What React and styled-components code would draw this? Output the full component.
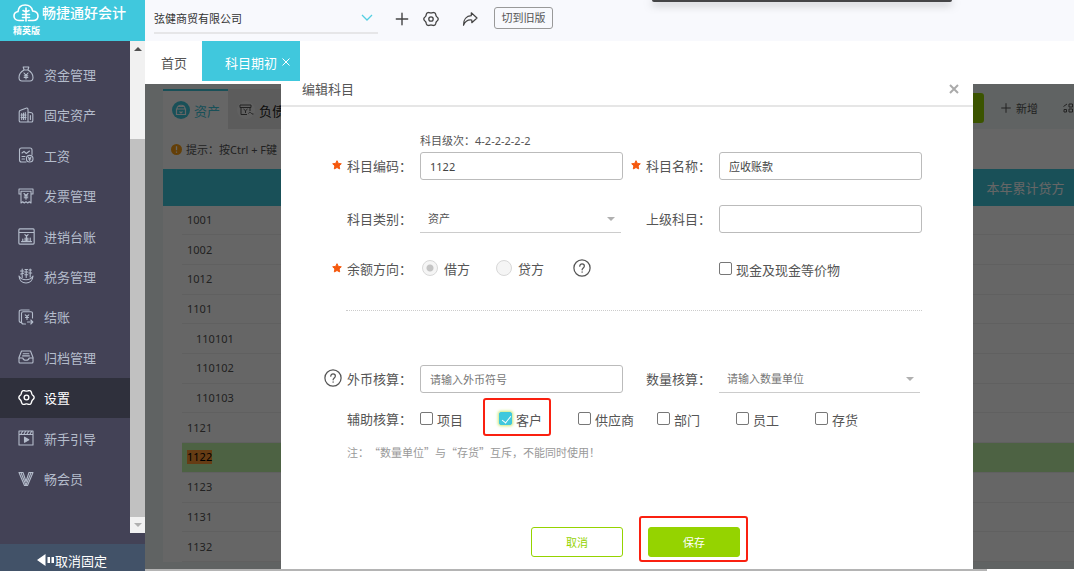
import React, { useState } from "react";
import styled, { createGlobalStyle, css } from "styled-components";

const GlobalStyle = createGlobalStyle`
  * {
    box-sizing: border-box;
  }

  body {
    margin: 0;
    overflow: hidden;
    color: #555;
    background: #fff;
    text-spacing-trim: space-all;
  }

  body, button, input, select {
    font-family: "Noto Sans", "Noto Sans CJK SC", sans-serif;
    font-size: 11px;
  }

  button {
    padding: 0;
    border: 0;
    color: inherit;
    background: none;
    cursor: pointer;
  }

  svg {
    display: block;
    flex: none;
  }
`;

// six soft teeth round a centre
const gearPath = (c, r, depth) => {
  const points = [];
  for (let i = 0; i < 72; i++) {
    const a = (i * Math.PI) / 36;
    const d = r + depth * Math.cos(6 * a);
    points.push(
      `${(c + d * Math.cos(a)).toFixed(2)} ${(c + d * Math.sin(a)).toFixed(2)}`
    );
  }
  return `M${points.join("L")}Z`;
};

const Icon = ({ size = 16, stroke = 1.1, children }) => (
  <svg
    width={size}
    height={size}
    viewBox="0 0 16 16"
    fill="none"
    stroke="currentColor"
    strokeWidth={stroke}
    strokeLinecap="round"
    strokeLinejoin="round"
    aria-hidden="true"
  >
    {children}
  </svg>
);

const GearIcon = ({ size }) => (
  <Icon size={size} stroke={1.3}>
    <path d={gearPath(8, 6.6, 0.6)} />
    <circle cx="8" cy="8" r="2.2" />
  </Icon>
);

const HelpIcon = () => (
  <Icon size={18} stroke={1.1}>
    <circle cx="8" cy="8" r="7.2" />
    <path d="M6 6.4c0-2.7 4.1-2.6 4.1-.1 0 1.6-2 1.7-2 3.3M8.1 11.4v.3" />
  </Icon>
);

const StarIcon = () => (
  <svg width="10" height="10" viewBox="0 0 10 10" fill="#f5590e">
    <path
      d="M5 .7l1.3 2.700 3 .4-2.200 2.100.6 3L5 7.500 2.300 8.900l.6-3L.7 3.800l3-.4z"
      stroke="#f5590e"
      strokeLinejoin="round"
    />
  </svg>
);

const menu = [
  {
    name: "资金管理",
    icon: (
      <Icon>
        <path d="M5.2 1h5.6L9.9 4H6.1zM6 4C3 5.600 1 8.500 1 11.500 1 14 2 15 4 15h8c2 0 3-1 3-3.500C15 8.500 13 5.600 10 4" />
        <path d="M6 7l2 2.400L10 7M8 9.500v3.500M6.200 9.700h3.600M6.200 11.400h3.600" />
      </Icon>
    ),
  },
  {
    name: "固定资产",
    icon: (
      <Icon>
        <path d="M2.500 3.300L8 1.200c1.200-.4 2 .1 2 1.200V15H2.500c-.9 0-1.300-.4-1.300-1.300V5c0-.9.400-1.400 1.300-1.700zM10 5l3.500.8c.9.200 1.300.7 1.300 1.500v6.400c0 .9-.4 1.300-1.300 1.300H10" />
        <path d="M3.700 6.500v6M7.300 5.500v7M5.500 6v6.500M3 8h5M3 10.500h5M12.400 8.500v4" />
      </Icon>
    ),
  },
  {
    name: "工资",
    icon: (
      <Icon>
        <path d="M14 7.500V3c0-1.300-.7-2-2-2H3.500C2 1 1.500 1.700 1.500 3v10c0 1.300.6 2 2 2H8" />
        <path d="M4 6l2-1.700L8.300 6.500 11.500 4M4 9.500h3M4 12h2.500" />
        <circle cx="11.700" cy="11.700" r="3.300" />
        <path d="M10.500 10.300l1.200 1.300 1.200-1.300M11.700 11.800v1.700M10.600 12h2.200" />
      </Icon>
    ),
  },
  {
    name: "发票管理",
    icon: (
      <Icon>
        <path d="M3 6H1V1h14v5h-2M3 3.300h10V15l-1.700-1.300L9.700 15 8 13.700 6.300 15l-1.600-1.300L3 15z" />
        <path d="M6 5.500l2 2 2-2M8 7.500v3.700M6.200 8h3.600M6.200 9.700h3.600" />
      </Icon>
    ),
  },
  {
    name: "进销台账",
    icon: (
      <Icon size={17}>
        <path d="M1.700.9h12.600c.6 0 .9.4.9.9v12.400c0 .5-.3.900-.9.900H1.700c-.6 0-.9-.4-.9-.9V1.800c0-.5.300-.9.900-.9zM1 4.200h14" />
        <path d="M3.300 12.800h9.400M4.500 12.500v-2M6.700 12.500V9.500M9.300 12.500V9.500M11.500 12.500V9.500M6.500 6.300L8 7.800l1.500-1.500M8 7.800v4.700" />
      </Icon>
    ),
  },
  {
    name: "税务管理",
    icon: (
      <Icon>
        <path d="M1 8c.3 4.300 3.200 7 7 7s6.700-2.700 7-7c-1.500 2.700-3.500 3.800-7 3.800S2.500 10.700 1 8z" />
        <path d="M2.500 3h3.300M4.200 1v8.500M2.700 6l3-.8M7 1.500h2.500M6.800 4h3M8.200 1.500v8M6.800 6.700h3M11 2h2.500M12.200 1v8M10.900 5h2.800" />
      </Icon>
    ),
  },
  {
    name: "结账",
    icon: (
      <Icon>
        <path d="M3.500 13.500c-1.600 0-2.300-.6-2.300-2V3c0-1.400.6-2 2-2h8M14.500 9V4.500c0-1.200-.5-1.700-1.700-1.700H5.200c-1.200 0-1.700.5-1.700 1.700V13c0 1.500.6 2 2 2h2" />
        <path d="M7.200 5.800l1.800 1.700 1.800-1.700M9 7.500V10.500M7.500 8.500h3M9.500 13h5.300M12.800 11l2 2-2 2" />
      </Icon>
    ),
  },
  {
    name: "归档管理",
    icon: (
      <Icon>
        <path d="M3.500 2h9L15 8.500V13c0 .7-.3 1-1 1H2c-.7 0-1-.3-1-1V8.500z" />
        <path d="M1.200 9h3.600c.5 2 1.300 2.300 3.200 2.300s2.700-.3 3.200-2.300h3.600M5.200 4.700h5.600M4.600 6.900h6.800" />
      </Icon>
    ),
  },
  { name: "设置", active: true, icon: <GearIcon size={17} /> },
  {
    name: "新手引导",
    icon: (
      <Icon>
        <path d="M1 1h14v14H1zM1 4.500h14M3 4l1.500-2.500M6 4l1.500-2.500M9 4l1.500-2.500M12 4l1.500-2.500" />
        <path d="M6.500 7.200v5L10.800 9.700z" fill="currentColor" />
      </Icon>
    ),
  },
  {
    name: "畅会员",
    icon: (
      <Icon>
        <path d="M1 1.500h4l3 9 3-9h4L9.500 14.500h-3zM3 1.700l5 12.500 5-12.500" />
      </Icon>
    ),
  },
];

const accounts = [
  { code: "1001" },
  { code: "1002" },
  { code: "1012" },
  { code: "1101" },
  { code: "110101", child: true },
  { code: "110102", child: true },
  { code: "110103", child: true },
  { code: "1121" },
  { code: "1122", selected: true },
  { code: "1123" },
  { code: "1131" },
  { code: "1132" },
];

const assists = ["项目", "客户", "供应商", "部门", "员工", "存货"];

function Sidebar() {
  return (
    <Aside>
      <Brand>
        <BrandRow>
          <svg width="26" height="18" viewBox="0 0 26 18" fill="none" stroke="#fff" strokeWidth="1.6" strokeLinecap="round">
            <path d="M10.500 16.500H6C3 16.500 1 14.600 1 12c0-2.300 1.500-4 4-4.500C5.400 3.500 8 1 12.200 1c4.100 0 6.700 2.300 7.500 6 3.300.3 5.300 2 5.300 4.900 0 2.800-2 4.600-5 4.600h-4.500" />
            <path d="M13 4v13M10 6.500l3 1.500M16 6.500L13 8M9.500 10.500h7M9.500 13.500h7" />
          </svg>
          <BrandName>畅捷通好会计</BrandName>
        </BrandRow>
        <Edition>精英版</Edition>
      </Brand>
      <NavArea>
        <Nav>
          {menu.map((item) => (
            <NavItem key={item.name} href="#" $active={item.active}>
              <NavIcon>{item.icon}</NavIcon>
              {item.name}
            </NavItem>
          ))}
        </Nav>
        <ScrollTrack>
          <Arrow $up />
          <ScrollThumb />
          <Arrow />
        </ScrollTrack>
      </NavArea>
      <Unpin>
        <svg width="18" height="12" viewBox="0 0 18 12" fill="#fff">
          <path d="M8.500 0v12L0 6zM10.500 3H13v6h-2.500zM14.500 3H17v6h-2.500z" />
        </svg>
        取消固定
      </Unpin>
    </Aside>
  );
}

function TopBar() {
  return (
    <Header>
      <Company>
        <CompanySelect aria-label="公司">
          <option>弦健商贸有限公司</option>
        </CompanySelect>
        <svg width="12" height="8" viewBox="0 0 12 8" fill="none" stroke="#54cfe2" strokeWidth="1.3">
          <path d="M1 1l5 5 5-5" />
        </svg>
      </Company>
      <Tools>
        <button aria-label="添加">
          <Icon size={14} stroke={1.6}>
            <path d="M8 1.500v13M1.500 8h13" />
          </Icon>
        </button>
        <button aria-label="设置">
          <GearIcon size={16} />
        </button>
        <button aria-label="分享">
          <Icon stroke={1.2}>
            <path d="M9.300 1.800L15 7l-5.200 4.700V9C5.500 8.500 3 10.500 1.500 14.300 1.300 8.500 4.500 5 9.300 4.700z" />
          </Icon>
        </button>
      </Tools>
      <OldVersion>切到旧版</OldVersion>
      <FloatingBar />
    </Header>
  );
}

function AccountPage() {
  return (
    <Page>
      <PageBar>
        <TypeTab $active>
          <svg width="18" height="18" viewBox="0 0 18 18" fill="none" stroke="#fff" strokeWidth="1.200">
            <circle cx="9" cy="9" r="9" fill="#40c8dd" stroke="none" />
            <path d="M4.500 8h9v5.500h-9zM5 8c0-5 8-5 8 0M7.500 10.500L9 12l1.500-1.500M6 5.500h6" />
          </svg>
          资产
        </TypeTab>
        <TypeTab>
          <svg width="18" height="18" viewBox="0 0 18 18" fill="none" stroke="#555">
            <circle cx="9" cy="9" r="9" fill="#f0f0f0" stroke="none" />
            <path d="M3 4h11v2.500H3zM4 6.500v7h6M13 6.500v3.500M6.500 8l2 1.700 2-1.700M8.500 9.700V12M11.500 12.500c1-2 2.500-1 3.500.5h1.500" />
          </svg>
          负债
        </TypeTab>
        <PageTools>
          <GreenButton aria-label="操作" />
          <PlainButton>
            <Icon size={10} stroke={1.6}>
              <path d="M8 1v14M1 8h14" />
            </Icon>
            新增
          </PlainButton>
          <svg width="12" height="12" viewBox="0 0 12 12" fill="none" stroke="#555">
            <path d="M1.500 4.500L5 2M7 2h3.500v3H7zM2 7.500h2.500v2.500H2zM7 7h3.500v3H7z" />
          </svg>
        </PageTools>
      </PageBar>
      <Tip>
        <svg width="11" height="11" viewBox="0 0 11 11">
          <circle cx="5.500" cy="5.500" r="5.500" fill="#fa9f14" />
          <path d="M5.500 2.200v4M5.500 7.500v1.200" stroke="#fff" strokeWidth="1.300" />
        </svg>
        提示：按Ctrl + F键
      </Tip>
      <Table>
        <thead>
          <tr>
            <th />
            <th />
            <th>本年累计贷方</th>
          </tr>
        </thead>
        <tbody>
          {accounts.map((row) => (
            <Row key={row.code} $selected={row.selected} $child={row.child}>
              <td />
              <td>{row.selected ? <mark>{row.code}</mark> : row.code}</td>
              <td />
            </Row>
          ))}
        </tbody>
      </Table>
    </Page>
  );
}

function EditDialog() {
  const [checked, setChecked] = useState({ 客户: true });

  const toggle = (name) => {
    setChecked({ ...checked, [name]: !checked[name] });
  };

  return (
    <Overlay>
      <Dialog role="dialog" aria-labelledby="dialog-title">
        <DialogHeader>
          <h2 id="dialog-title">编辑科目</h2>
          <button aria-label="关闭">
            <svg width="10" height="10" viewBox="0 0 10 10" stroke="#aaa" strokeWidth="2">
              <path d="M1 1l8 8M9 1L1 9" />
            </svg>
          </button>
        </DialogHeader>
        <Form>
          <Hint>科目级次：4-2-2-2-2-2</Hint>
          <FormRow>
            <Label htmlFor="code">
              <StarIcon />
              科目编码：
            </Label>
            <TextInput id="code" defaultValue="1122" />
            <Label htmlFor="name">
              <StarIcon />
              科目名称：
            </Label>
            <TextInput id="name" defaultValue="应收账款" />
          </FormRow>
          <FormRow $gap={25}>
            <Label htmlFor="type">科目类别：</Label>
            <SelectBox>
              <select id="type">
                <option>资产</option>
              </select>
              <Arrow />
            </SelectBox>
            <Label htmlFor="parent">上级科目：</Label>
            <TextInput id="parent" />
          </FormRow>
          <FormRow $gap={22}>
            <Label as="span">
              <StarIcon />
              余额方向：
            </Label>
            <Radios>
              <label>
                <Radio name="direction" defaultChecked disabled />
                借方
              </label>
              <label>
                <Radio name="direction" disabled />
                贷方
              </label>
              <HelpIcon />
            </Radios>
            <CheckLabel $wide>
              <Checkbox />
              现金及现金等价物
            </CheckLabel>
          </FormRow>
          <Divider />
          <FormRow>
            <Label htmlFor="currency">
              <HelpIcon />
              外币核算：
            </Label>
            <TextInput id="currency" placeholder="请输入外币符号" />
            <Label htmlFor="unit">数量核算：</Label>
            <SelectBox $muted>
              <select id="unit">
                <option>请输入数量单位</option>
              </select>
              <Arrow />
            </SelectBox>
          </FormRow>
          <AssistRow>
            <Label as="span">辅助核算：</Label>
            {assists.map((name) => (
              <CheckLabel key={name}>
                <Checkbox
                  checked={!!checked[name]}
                  onChange={() => toggle(name)}
                />
                {name}
                {name === "客户" && <Marker $x={16} $top={-7} $bottom={-3} $right={27} />}
              </CheckLabel>
            ))}
          </AssistRow>
          <Note>注：“数量单位”与“存货”互斥，不能同时使用！</Note>
        </Form>
        <Actions>
          <ActionButton>取消</ActionButton>
          <ActionWrap>
            <ActionButton $primary>保存</ActionButton>
            <Marker $x={9} $top={-11} $bottom={-5} $right={-8} />
          </ActionWrap>
        </Actions>
      </Dialog>
    </Overlay>
  );
}

function App() {
  return (
    <>
      <GlobalStyle />
      <Shell>
        <Sidebar />
        <Main>
          <TopBar />
          <PageTabs>
            <PageTab>首页</PageTab>
            <PageTab $active>
              科目期初
              <svg width="8" height="8" viewBox="0 0 8 8" stroke="#fff">
                <path d="M.5.5l7 7M7.500.5l-7 7" />
              </svg>
            </PageTab>
          </PageTabs>
          <Content>
            <AccountPage />
            <EditDialog />
          </Content>
          <BottomScroll />
        </Main>
      </Shell>
    </>
  );
}

const Shell = styled.div`
  display: flex;
  height: 100vh;
`;

const Aside = styled.aside`
  display: flex;
  flex-direction: column;
  flex: none;
  width: 145px;
  background: #434256;
`;

const Brand = styled.div`
  flex: none;
  height: 41px;
  padding: 4px 0 0 13px;
  color: #fff;
  background: #40c8dd;
`;

const BrandRow = styled.div`
  display: flex;
  gap: 3px;
  height: 20px;
`;

const BrandName = styled.span`
  font-size: 14px;
  font-weight: 500;
  line-height: 18px;
`;

const Edition = styled.div`
  font-size: 9px;
  font-weight: 700;
  line-height: 14px;
`;

const NavArea = styled.div`
  display: flex;
  flex: 1;
  min-height: 0;
`;

const Nav = styled.nav`
  display: grid;
  grid-auto-rows: 1fr;
  flex: 1;
  padding: 13px 0 45px;
`;

const NavItem = styled.a`
  display: flex;
  align-items: center;
  gap: 9px;
  padding-left: 18px;
  font-size: 13px;
  color: ${(props) => (props.$active ? "#fff" : "#b4bccb")};
  background: ${(props) => (props.$active ? "#2f303c" : "none")};
  text-decoration: none;
`;

const NavIcon = styled.span`
  width: 17px;
`;

const ScrollTrack = styled.div`
  display: flex;
  flex-direction: column;
  align-items: center;
  width: 15px;
  margin-bottom: 11px;
  padding: 6px 0;
  background: #f1f1f1;
`;

const ScrollThumb = styled.div`
  flex: 1;
  width: 100%;
  margin: 88px 0 6px;
  background: #c1c1c1;
`;

const Arrow = styled.i`
  width: 0;
  height: 0;
  border: 4px solid transparent;
  ${(props) =>
    props.$up
      ? css`
          border-top: 0;
          border-bottom-color: #505050;
        `
      : css`
          border-bottom: 0;
          border-top-color: #b0b0b0;
        `}
`;

const Unpin = styled.button`
  display: flex;
  flex: none;
  align-items: center;
  height: 27px;
  padding: 5px 0 0 37px;
  font-size: 13px;
  color: #fff;
  background: #425268;
`;

const Main = styled.div`
  display: flex;
  flex: 1;
  flex-direction: column;
  min-width: 0;
`;

const Header = styled.header`
  position: relative;
  display: flex;
  flex: none;
  height: 41px;
  padding-left: 9px;
  background: #f8f9fd;
`;

const Company = styled.div`
  display: flex;
  align-items: center;
  width: 224px;
  height: 34px;
  padding: 4px 5px 0 0;
  border-bottom: 2px solid #e6e6e8;
`;

const CompanySelect = styled.select`
  flex: 1;
  padding: 0;
  border: 0;
  appearance: none;
  color: #333;
  background: none;
`;

const Tools = styled.div`
  display: flex;
  align-items: center;
  height: 37px;
  margin: 0 16px 0 17px;
  color: #444;

  button + button {
    margin-left: 14px;
  }

  button:last-child {
    margin-left: 23px;
  }
`;

const OldVersion = styled.button`
  width: 59px;
  height: 22px;
  margin-top: 7px;
  border: 1px solid #999;
  border-radius: 3px;
  line-height: 18px;
`;

const FloatingBar = styled.div`
  position: absolute;
  top: 0;
  right: 122px;
  width: 300px;
  height: 2px;
  border-radius: 0 0 3px 3px;
  background: #454547;
  box-shadow: 0 2px 8px rgba(0, 0, 0, 0.5);
`;

const PageTabs = styled.div`
  display: flex;
  flex: none;
  height: 43px;
  padding-bottom: 3px;
`;

const PageTab = styled.button`
  display: flex;
  align-items: center;
  gap: 5px;
  padding: 2px 15px 0 16px;
  font-size: 13px;
  ${(props) =>
    props.$active &&
    css`
      padding: 2px 10px 0 23px;
      color: #fff;
      background: #40c8dd;
    `}
`;

const Content = styled.main`
  position: relative;
  flex: 1;
  min-height: 0;
  background: #f1f8f7;
`;

const BottomScroll = styled.div`
  flex: none;
  height: 2px;
  margin-right: 87px;
  background: #b4b4b4;
`;

const Page = styled.div`
  height: 100%;
  padding-left: 18px;
`;

const PageBar = styled.div`
  display: flex;
  height: 45px;
  padding-top: 5px;
`;

const TypeTab = styled.button`
  display: flex;
  align-items: center;
  gap: 4px;
  width: ${(props) => (props.$active ? 65 : 72)}px;
  padding-left: 9px;
  border-top: 2px solid ${(props) => (props.$active ? "#40c8dd" : "#e6e6e6")};
  font-size: 13px;
  color: ${(props) => (props.$active ? "#40c8dd" : "#222")};
  background: ${(props) => (props.$active ? "#fff" : "#e6e6e6")};
`;

const PageTools = styled.div`
  display: flex;
  align-items: center;
  height: 38px;
  margin-left: auto;
`;

const GreenButton = styled.button`
  width: 60px;
  height: 30px;
  border-radius: 3px;
  background: #95d300;
`;

const PlainButton = styled.button`
  display: flex;
  align-items: center;
  gap: 5px;
  margin: 0 24px 0 17px;
`;

const Tip = styled.div`
  display: flex;
  align-items: center;
  gap: 4px;
  height: 40px;
  padding-left: 8px;
  background: #fff;
`;

const Table = styled.table`
  width: 100%;
  height: 393px;
  border-collapse: collapse;
  background: #fff;

  th {
    height: 37px;
    padding: 0;
    font-size: 13px;
    font-weight: 400;
    color: #fff;
    background: #40c8dd;
  }

  th:first-child {
    width: 19px;
  }

  th:last-child {
    width: 97px;
  }
`;

const Row = styled.tr`
  td {
    padding: 0;
    line-height: 14px;
  }

  td + td {
    padding-left: ${(props) => (props.$child ? 14 : 5)}px;
    border-bottom: 1px solid #f0f0f0;
    background: ${(props) => (props.$selected ? "#c0f5a8" : "none")};
  }

  mark {
    display: inline-block;
    color: #000;
    background: #ff9632;
  }
`;

const Overlay = styled.div`
  position: absolute;
  inset: 0;
  display: flex;
  padding: 0 101px 0 136px;
  background: rgba(0, 0, 0, 0.6);
`;

const Dialog = styled.section`
  flex: 1;
  background: #fff;
`;

const DialogHeader = styled.header`
  display: flex;
  align-items: flex-start;
  justify-content: space-between;
  height: 23px;
  padding: 0 14px 0 21px;
  border-bottom: 2px solid #e6e6e6;

  h2 {
    margin: 0;
    font-size: 13px;
    font-weight: 400;
    line-height: 11px;
  }
`;

const Form = styled.div`
  padding: 25px 51px 0 42px;
`;

const Hint = styled.div`
  padding: 0 0 2px 97px;
  line-height: 18px;
`;

const FormRow = styled.div`
  display: grid;
  grid-template-columns: 97px 1fr 96px 1fr;
  align-items: center;
  height: 28px;
  margin-top: ${(props) => props.$gap || 0}px;
`;

const Label = styled.label`
  display: flex;
  align-items: center;
  justify-content: flex-end;
  gap: 5px;
  padding: 0 8px 2px 0;
  font-size: 13px;
  white-space: nowrap;
`;

const TextInput = styled.input`
  width: 100%;
  min-width: 0;
  height: 28px;
  padding: 0 9px;
  border: 1px solid #bbb;
  border-radius: 3px;
  color: #444;

  &::placeholder {
    color: #777;
  }
`;

const SelectBox = styled.div`
  display: flex;
  align-items: center;
  height: 28px;
  margin-right: 2px;
  padding-right: 6px;
  border-bottom: 1px solid #ccc;

  select {
    flex: 1;
    padding: 0 8px;
    border: 0;
    appearance: none;
    color: ${(props) => (props.$muted ? "#777" : "#555")};
    background: none;
  }
`;

const Radios = styled.div`
  display: flex;
  align-items: center;
  gap: 26px;
  padding: 0 0 2px 2px;
  font-size: 13px;

  label {
    display: flex;
    align-items: center;
    gap: 6px;
  }

  svg {
    margin-left: 3px;
  }
`;

const Radio = styled.input.attrs({ type: "radio" })`
  width: 16px;
  height: 16px;
  margin: 0;
  border: 1px solid #d8d8d8;
  border-radius: 50%;
  appearance: none;
  background: #f5f5f5;

  &:checked {
    background: radial-gradient(#c4c4c4 3px, #f5f5f5 4px);
  }
`;

const CheckLabel = styled.label`
  position: relative;
  display: flex;
  align-items: center;
  gap: 4px;
  height: 28px;
  font-size: 13px;
  white-space: nowrap;
  ${(props) => props.$wide && "grid-column: 4;"}
`;

const Checkbox = styled.input.attrs({ type: "checkbox" })`
  width: 13px;
  height: 13px;
  margin: 0 0 2px;
  border: 1px solid #777;
  border-radius: 2px;
  appearance: none;
  background: #fff;

  &:checked {
    border-color: #40c8dd;
    background: #40c8dd;
    box-shadow: 0 0 3px 1px #c8e878;
  }

  &:checked::after {
    content: "";
    display: block;
    width: 4px;
    height: 8px;
    margin: 1px 0 0 4px;
    border: solid #fff;
    border-width: 0 1px 1px 0;
    transform: rotate(38deg);
  }
`;

const Divider = styled.hr`
  margin: 27px 0 54px 23px;
  border: 0;
  border-top: 1px dotted #ccc;
`;

const AssistRow = styled.div`
  display: grid;
  grid-template-columns: 97px repeat(6, 79px);
  align-items: center;
  margin-top: 12px;
`;

// red frame drawn over the parts to look at
const Marker = styled.span`
  position: absolute;
  top: ${(props) => props.$top}px;
  right: ${(props) => props.$right}px;
  bottom: ${(props) => props.$bottom}px;
  left: -${(props) => props.$x}px;
  border: 2px solid #fa2010;
  border-radius: 3px;
  pointer-events: none;
`;

const Note = styled.p`
  margin: 10px 0 0 24px;
  font-family: "Noto Sans CJK SC", sans-serif;
  line-height: 18px;
  color: #999;
`;

const Actions = styled.div`
  display: flex;
  align-items: center;
  justify-content: center;
  gap: 25px;
  margin-top: 66px;
  padding-left: 17px;
`;

const ActionWrap = styled.div`
  position: relative;
`;

const ActionButton = styled.button`
  display: block;
  width: 92px;
  height: 30px;
  border: 1px solid #95d300;
  border-radius: 3px;
  color: ${(props) => (props.$primary ? "#fff" : "#95d300")};
  background: ${(props) => (props.$primary ? "#95d300" : "#fff")};
`;

export default App;
